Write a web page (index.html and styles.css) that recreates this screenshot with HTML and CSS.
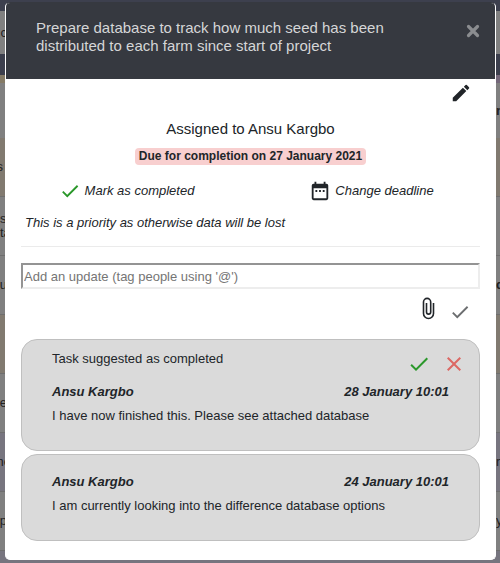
FILE: index.html
```html
<!DOCTYPE html>
<html lang="en">
<head>
<meta charset="utf-8">
<meta name="viewport" content="width=device-width, initial-scale=1">
<title>Task details</title>
<link rel="stylesheet" href="styles.css">
</head>
<body>
<div class="backdrop" aria-hidden="true">
  <div class="row row-nav"></div>
  <div class="row row-search"><span>c</span></div>
  <div class="row row-bar"></div>
  <div class="row row-split"></div>
  <div class="row row-first"><span></span><b>n</b></div>
  <div class="row row-tan row-cut"><span>s</span></div>
  <div class="row row-start"><span>s<br>ta</span></div>
  <div class="row"><span>u</span><b>d</b></div>
  <div class="row row-tan"></div>
  <div class="row"><span>e</span></div>
  <div class="row row-violet row-wide"><span>ne</span><span>r</span></div>
  <div class="row"><span>ap</span><span>y</span></div>
  <div class="row row-violet"></div>
</div>
<main class="modal" role="dialog" aria-labelledby="task-title">
  <header class="modal-header">
    <h1 id="task-title" class="title">Prepare database to track how much seed has been distributed to each farm since start of project</h1>
    <button class="close" type="button" aria-label="Close">
      <svg width="14" height="14" viewBox="0 0 14 14"><path d="M2.5 2.5l9 9M11.5 2.5l-9 9" stroke="currentColor" stroke-width="3.2" stroke-linecap="round"/></svg>
    </button>
  </header>
  <div class="modal-body">
    <div class="edit-row">
      <button class="icon-button" type="button" aria-label="Edit task">
        <svg width="22" height="22" viewBox="0 0 24 24"><path fill="currentColor" d="M3 17.25V21h3.75L17.81 9.94l-3.75-3.75L3 17.25zM20.71 7.04a1 1 0 0 0 0-1.41l-2.34-2.34a1 1 0 0 0-1.41 0l-1.83 1.83 3.75 3.75 1.83-1.83z"/></svg>
      </button>
    </div>
    <h2 class="assigned">Assigned to Ansu Kargbo</h2>
    <div class="due-row"><span class="due">Due for completion on 27 January 2021</span></div>
    <div class="actions">
      <button class="action" type="button">
        <svg class="green" width="22" height="22" viewBox="0 0 24 24"><path fill="currentColor" d="M9 16.17L4.83 12l-1.42 1.41L9 19 21 7l-1.41-1.41z"/></svg>
        Mark as completed
      </button>
      <button class="action" type="button">
        <svg width="22" height="22" viewBox="0 0 24 24"><path fill="currentColor" d="M9 11H7v2h2v-2zm4 0h-2v2h2v-2zm4 0h-2v2h2v-2zm2-7h-1V2h-2v2H8V2H6v2H5a2 2 0 0 0-2 2v14a2 2 0 0 0 2 2h14a2 2 0 0 0 2-2V6a2 2 0 0 0-2-2zm0 16H5V9h14v11z"/></svg>
        Change deadline
      </button>
    </div>
    <p class="note">This is a priority as otherwise data will be lost</p>
    <hr class="rule">
    <form class="update">
      <input class="update-input" type="text" aria-label="Add an update" placeholder="Add an update (tag people using '@')">
      <div class="update-tools">
        <button class="icon-button" type="button" aria-label="Attach file">
          <svg width="24" height="26" viewBox="0 0 24 26"><path fill="none" stroke="currentColor" stroke-width="1.6" d="M16.500 7v10.500a5 5 0 0 1-10 0V6a3.600 3.600 0 0 1 7.200 0V16a2.100 2.100 0 0 1-4.200 0V7"/></svg>
        </button>
        <button class="icon-button send" type="submit" aria-label="Post update">
          <svg width="22" height="22" viewBox="0 0 24 24"><path fill="currentColor" d="M9 16.17L4.83 12l-1.42 1.41L9 19 21 7l-1.41-1.41z"/></svg>
        </button>
      </div>
    </form>
    <section class="updates">
      <article class="card">
        <div class="card-status">
          <span>Task suggested as completed</span>
          <span class="card-tools">
            <button class="icon-button green" type="button" aria-label="Approve">
              <svg width="24" height="24" viewBox="0 0 24 24"><path fill="currentColor" d="M9 16.17L4.83 12l-1.42 1.41L9 19 21 7l-1.41-1.41z"/></svg>
            </button>
            <button class="icon-button red" type="button" aria-label="Reject">
              <svg width="24" height="24" viewBox="0 0 24 24"><path fill="currentColor" d="M19 6.410L17.590 5 12 10.590 6.410 5 5 6.410 10.590 12 5 17.590 6.410 19 12 13.410 17.590 19 19 17.590 13.410 12z"/></svg>
            </button>
          </span>
        </div>
        <div class="card-meta"><span>Ansu Kargbo</span><time datetime="2021-01-28T10:01">28 January 10:01</time></div>
        <p class="card-text">I have now finished this. Please see attached database</p>
      </article>
      <article class="card">
        <div class="card-meta"><span>Ansu Kargbo</span><time datetime="2021-01-24T10:01">24 January 10:01</time></div>
        <p class="card-text">I am currently looking into the difference database options</p>
      </article>
    </section>
  </div>
</main>
</body>
</html>
```

FILE: styles.css
```css
* { box-sizing: border-box; }

body {
  margin: 0;
  min-height: 100vh;
  background: #77757f;
  color: #212529;
  font: 13px/20px "Liberation Sans", Arial, sans-serif;
  overflow: hidden;
}

h1, h2, p { margin: 0; font-weight: normal; }

button {
  padding: 0;
  border: 0;
  background: none;
  color: inherit;
  font: inherit;
  cursor: pointer;
}

svg { display: block; flex: none; }

/* Dimmed page behind the dialog */
.backdrop {
  position: absolute;
  inset: 0;
  overflow: hidden;
  color: #222;
  line-height: 14px;
}

.row {
  display: flex;
  justify-content: space-between;
  align-items: center;
  height: 59px;
  border-bottom: 1px solid #6e6e6e;
  background: #808080;
}

.row span:first-child {
  display: flex;
  justify-content: flex-end;
  width: 7px;
}
.row.row-start span { display: block; }
.row.row-wide span:first-child { width: 11px; }
.row.row-cut span { width: 3px; }
.row b, .row span + span { width: 4px; }
.row-nav { height: 11px; border: 0; background: #3d404e; }
.row-search { height: 43px; border: 0; }
.row-bar { height: 21px; border: 0; background: #3c3f4d; }
.row-split { height: 8px; border: 0; background: linear-gradient(90deg, #857b66 50%, #74687a 50%); }
.row-first { height: 55px; border: 0; }
.row-tan { background: #817a70; }
.row-violet { background: #77757f; }

.modal {
  position: relative;
  margin: 2px 4px 3px 5px;
  border: 1px solid #fff;
  border-top-color: #363940;
  border-radius: 5px;
  background: #fff;
  overflow: hidden;
}

.modal-header {
  display: flex;
  justify-content: space-between;
  align-items: flex-start;
  gap: 32px;
  min-height: 76px;
  padding: 16px 15px 24px 30px;
  background: #363940;
  color: #d5d6d7;
}

.title { max-width: 364px; font-size: 15px; line-height: 18px; }
.close { margin-top: 5px; color: #8b8d90; }

.modal-body { padding: 3px 15px 18px; }
.edit-row { display: flex; justify-content: flex-end; padding-right: 8px; }
.icon-button { display: flex; }

.assigned { margin-top: 15px; font-size: 15px; line-height: 20px; text-align: center; }
.due-row { display: flex; justify-content: center; margin-top: 9px; }
.due {
  padding: 0 4px;
  border-radius: 4px;
  background: #f8cfcf;
  font-size: 12px;
  font-weight: bold;
  line-height: 17px;
}

.actions {
  display: grid;
  grid-template-columns: 1fr 1fr;
  margin: 15px -14px 0 -17px;
}
.action {
  display: flex;
  justify-content: center;
  align-items: center;
  gap: 4px;
  font-style: italic;
}
.green { color: #2b982b; }
.red { color: #dc6864; }

.note { margin: 11px 4px 0; font-style: italic; }
.rule { margin: 13px 0 0; border: 0; border-top: 1px solid #ebebeb; }

.update-input {
  display: block;
  width: 100%;
  height: 26px;
  margin-top: 16px;
  padding: 0 1px;
  border: 2px solid;
  border-color: #949494 #ededed #ededed #949494;
  color: #212529;
  font: inherit;
}
.update-input::placeholder { color: #757575; }

.update-tools {
  display: flex;
  justify-content: flex-end;
  align-items: center;
  gap: 8px;
  padding: 6px 9px 0 0;
}
.send { color: #6c6e70; padding-top: 6px; }

.updates { display: grid; gap: 3px; margin-top: 16px; }
.card {
  padding: 17px 30px 24px;
  border: 1px solid #bfbfbf;
  border-radius: 16px;
  background: #dadada;
}
.card-status { display: flex; justify-content: space-between; height: 33px; margin-top: -8px; }
.card-tools { display: flex; gap: 11px; margin-right: -17px; padding-top: 3px; }
.card-meta {
  display: flex;
  justify-content: space-between;
  font-weight: bold;
  font-style: italic;
}
.card-text { margin-top: 4px; }
```
